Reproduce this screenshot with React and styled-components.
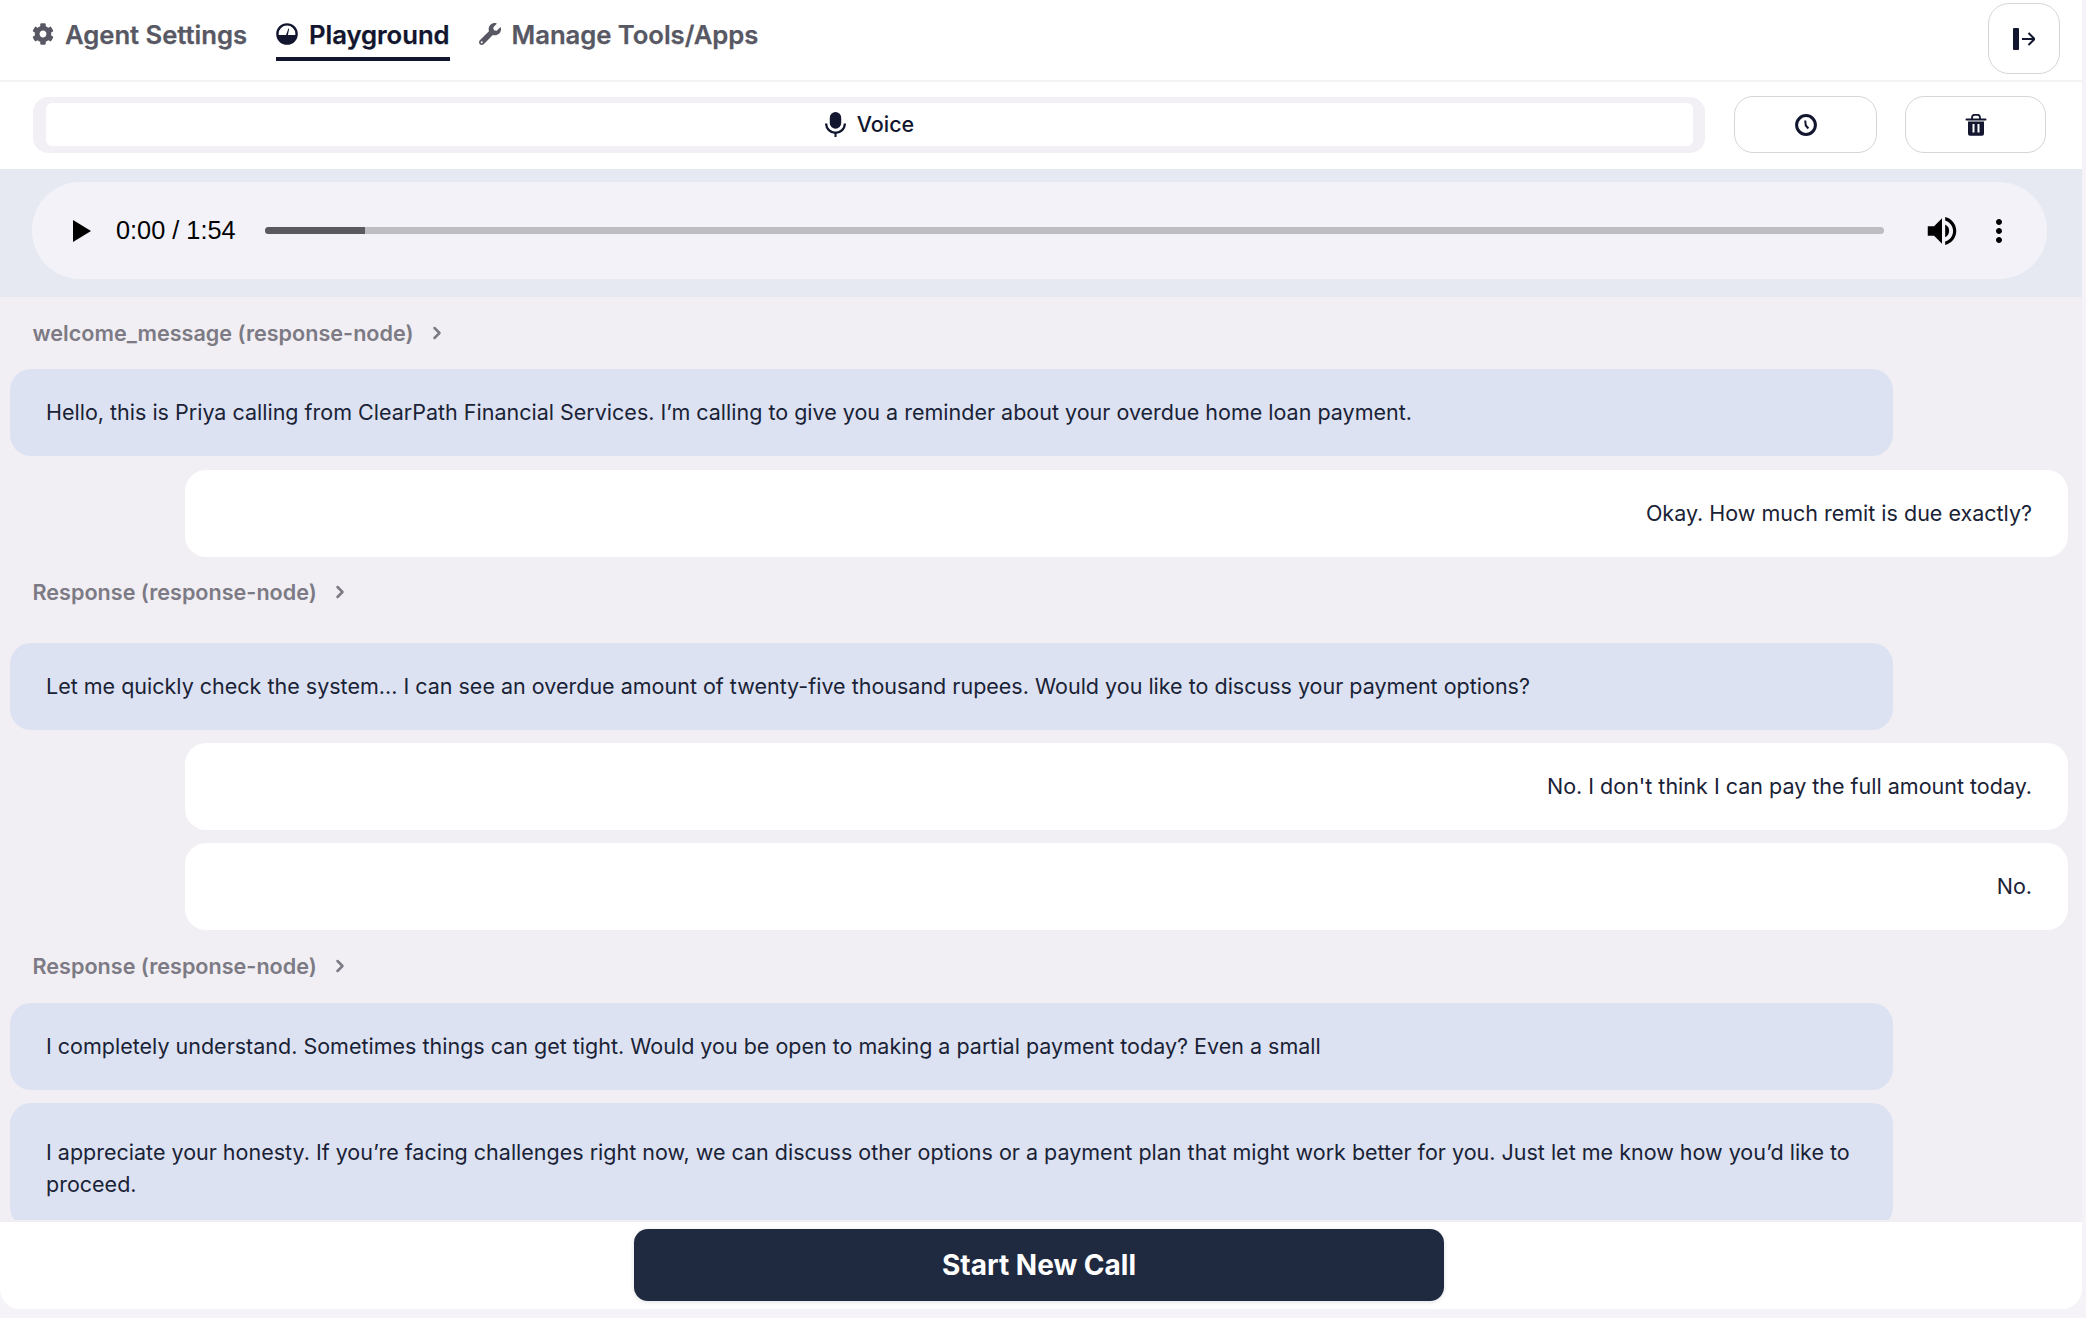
import React from 'react';
import styled, {createGlobalStyle} from 'styled-components';
import {FaCog, FaWrench} from 'react-icons/fa';
import {MdVolumeUp, MdMoreVert} from 'react-icons/md';
import {LuChevronRight} from 'react-icons/lu';

const GlobalStyle = createGlobalStyle`
  html, body {
    margin: 0;
    padding: 0;
    background: #f5f3f8;
    font-family: Inter, "Noto Sans", sans-serif;
  }
  * {
    box-sizing: border-box;
  }
`;

const Shell = styled.div`
  width: 2082px;
  height: 1309px;
  display: flex;
  flex-direction: column;
  background: #f1eff3;
  border-radius: 0 0 20px 20px;
  overflow: hidden;
`;

const Header = styled.header`
  flex: none;
  height: 82px;
  background: #fff;
  border-bottom: 2px solid #f3f2f5;
  display: flex;
  justify-content: space-between;
  align-items: flex-start;
  padding: 3px 22px 0 32px;
`;

const Tabs = styled.nav`
  display: flex;
  gap: 29px;
  margin-top: -3px;
`;

const Tab = styled.div`
  height: 61px;
  display: flex;
  align-items: center;
  gap: 11px;
  padding-top: 11px;
  font-size: 25.7px;
  font-weight: 600;
  letter-spacing: -0.05px;
  -webkit-text-stroke: 0.25px currentColor;
  color: ${(p) => (p.$active ? '#12162e' : '#575863')};
  border-bottom: 4px solid ${(p) => (p.$active ? '#12162e' : 'transparent')};
`;

const TabIcon = styled.span`
  width: 22px;
  height: 22px;
  display: flex;
  align-items: center;
  justify-content: center;
  svg {
    width: 22px;
    height: 22px;
    fill: currentColor;
  }
`;

const LogoutButton = styled.button`
  width: 72px;
  height: 71px;
  background: #fff;
  border: 1.5px solid #d6d6da;
  border-radius: 21px;
  display: flex;
  align-items: center;
  justify-content: center;
  color: #12162e;
  padding: 0;
`;

const Toolbar = styled.div`
  flex: none;
  height: 87px;
  background: #fff;
  display: flex;
  align-items: flex-start;
  padding: 14px 36px 0 33px;
  gap: 28px;
`;

const ModeTrack = styled.div`
  flex: 1;
  height: 56px;
  margin: 1px 1px 0 0;
  background: #f2f0f4;
  border-radius: 15px;
  padding: 6px 12px 7px 13px;
`;

const ModeOption = styled.div`
  height: 100%;
  background: #fff;
  border-radius: 6px;
  display: flex;
  align-items: center;
  justify-content: center;
  gap: 11px;
  padding-bottom: 1px;
  font-size: 21.5px;
  font-weight: 500;
  color: #12162e;
`;

const ToolButton = styled.button`
  width: ${(p) => p.$width}px;
  height: 57px;
  background: #fff;
  border: 1.5px solid #d6d6da;
  border-radius: 19px;
  display: flex;
  align-items: center;
  justify-content: center;
  padding: 0;
  color: #12162e;
`;

const PlayerBand = styled.div`
  flex: none;
  height: 128px;
  background: #e6e8f2;
  padding: 13px 35px 18px 32px;
`;

const Player = styled.div`
  height: 97px;
  background: #f2f2f8;
  border-radius: 48px;
  display: flex;
  align-items: center;
  padding-left: 40px;
  color: #000;
`;

const PlayIcon = styled.span`
  width: 0;
  height: 0;
  border-style: solid;
  border-width: 11px 0 11px 18px;
  border-color: transparent transparent transparent #000;
  margin-left: 1px;
  margin-right: 25px;
`;

const TimeText = styled.span`
  font-family: "Liberation Sans", Arial, sans-serif;
  font-size: 25.3px;
  width: 149px;
  flex: none;
`;

const Seek = styled.div`
  width: 1619px;
  height: 7px;
  background: #bebdc2;
  border-radius: 4px;
  overflow: hidden;
`;

const SeekFill = styled.div`
  width: ${(p) => p.$pct}%;
  height: 100%;
  background: #5a5960;
`;

const VolumeIcon = styled(MdVolumeUp)`
  width: 38px;
  height: 38px;
  margin-left: 39px;
  flex: none;
`;

const MoreIcon = styled(MdMoreVert)`
  width: 36px;
  height: 36px;
  margin-left: 20px;
  flex: none;
`;

const Chat = styled.main`
  flex: 1;
  min-height: 0;
  overflow: hidden;
  padding: 20px 14px 0 10px;
  display: flex;
  flex-direction: column;
`;

const NodeLabel = styled.div`
  height: 32px;
  flex: none;
  display: flex;
  align-items: center;
  gap: 13px;
  margin: ${(p) => p.$top || 0}px 0 ${(p) => p.$bottom || 20}px 22.5px;
  font-size: 21.6px;
  font-weight: 600;
  color: #7c7a84;
  svg {
    width: 20px;
    height: 20px;
    stroke-width: 3;
  }
`;

const Bubble = styled.div`
  flex: none;
  min-height: 87px;
  padding: ${(p) => (p.$tall ? '33px' : '27px')} 36px 28px;
  margin-bottom: ${(p) => (p.$tight ? '13px' : '13.5px')};
  border-radius: 21px;
  font-size: 21.5px;
  line-height: 32px;
  color: #1a2236;
  background: ${(p) => (p.$user ? '#fff' : '#dce2f2')};
  margin-left: ${(p) => (p.$user ? '175px' : '0')};
  margin-right: ${(p) => (p.$user ? '0' : '175px')};
  text-align: ${(p) => (p.$user ? 'right' : 'left')};
`;

const Footer = styled.footer`
  flex: none;
  height: 87px;
  margin-top: 2px;
  background: #fff;
  display: flex;
  justify-content: center;
  padding: 7px 4px 0 0;
`;

const StartButton = styled.button`
  width: 810px;
  height: 72px;
  background: #1f2a40;
  color: #fff;
  border: none;
  border-radius: 14px;
  font-family: inherit;
  font-size: 28px;
  font-weight: 700;
  box-shadow: 0 1px 4px rgba(31, 42, 64, 0.15);
`;

const GaugeIcon = () => (
  <svg viewBox="0 0 22 22">
    <circle cx="11" cy="11" r="9.6" fill="none" stroke="currentColor" strokeWidth="2.4" />
    <path d="M1.6 12h18.8A9.6 9.6 0 0 1 11 21 9.6 9.6 0 0 1 1.6 12z" />
    <path d="M10 12l2.4-6.5 0.7 0.2-1.2 6.3z" />
  </svg>
);

const MicIcon = () => (
  <svg width="21" height="25" viewBox="0 0 20 24" fill="#12162e">
    <rect x="4.5" y="0" width="11" height="16" rx="5.5" />
    <path d="M1 9.5a9 9 0 0 0 18 0" fill="none" stroke="#12162e" strokeWidth="2.2" transform="translate(0 1.5)" />
    <rect x="9" y="19" width="2" height="5" />
  </svg>
);

const ClockIcon = () => (
  <svg width="22" height="22" viewBox="0 0 22 22" fill="none" stroke="#12162e">
    <circle cx="11" cy="11" r="9.4" strokeWidth="3" />
    <path d="M10.2 6.5l0.6 5 2.6 3" strokeWidth="2" />
  </svg>
);

const TrashIcon = () => (
  <svg width="22" height="22" viewBox="0 0 22 22" fill="#12162e">
    <path d="M7 5V3.2A2.6 2.6 0 0 1 9.6 0.8h2.8A2.6 2.6 0 0 1 15 3.2V5" fill="none" stroke="#12162e" strokeWidth="1.8" />
    <rect x="0.5" y="4.5" width="21" height="2" rx="1" />
    <path d="M3 7.5h16v12.2a2 2 0 0 1-2 2H5a2 2 0 0 1-2-2zM7.5 10v8.5h2V10zm5 0v8.5h2V10z" fillRule="evenodd" />
  </svg>
);

const LogoutIcon = () => (
  <svg width="22" height="22" viewBox="0 0 22 22">
    <rect x="0" y="0" width="6" height="22" rx="1" fill="#12162e" />
    <path d="M9 11h12M15.5 5l6 6-6 6" fill="none" stroke="#12162e" strokeWidth="2" />
  </svg>
);

const Label = ({children, ...rest}) => (
  <NodeLabel {...rest}>
    <span>{children}</span>
    <LuChevronRight />
  </NodeLabel>
);

export default function App() {
  return (
    <Shell>
      <GlobalStyle />
      <Header>
        <Tabs>
          <Tab>
            <TabIcon>
              <FaCog />
            </TabIcon>
            Agent Settings
          </Tab>
          <Tab $active>
            <TabIcon>
              <GaugeIcon />
            </TabIcon>
            Playground
          </Tab>
          <Tab>
            <TabIcon>
              <FaWrench />
            </TabIcon>
            Manage Tools/Apps
          </Tab>
        </Tabs>
        <LogoutButton aria-label="Log out">
          <LogoutIcon />
        </LogoutButton>
      </Header>
      <Toolbar>
        <ModeTrack>
          <ModeOption>
            <MicIcon />
            Voice
          </ModeOption>
        </ModeTrack>
        <ToolButton $width={143} aria-label="History">
          <ClockIcon />
        </ToolButton>
        <ToolButton $width={141} aria-label="Delete">
          <TrashIcon />
        </ToolButton>
      </Toolbar>
      <PlayerBand>
        <Player>
          <PlayIcon />
          <TimeText>0:00 / 1:54</TimeText>
          <Seek>
            <SeekFill $pct={6.2} />
          </Seek>
          <VolumeIcon />
          <MoreIcon />
        </Player>
      </PlayerBand>
      <Chat>
        <Label>welcome_message (response-node)</Label>
        <Bubble>
          Hello, this is Priya calling from ClearPath Financial Services. I’m calling to give you a
          reminder about your overdue home loan payment.
        </Bubble>
        <Bubble $user>Okay. How much remit is due exactly?</Bubble>
        <Label $top={6} $bottom={34.5}>
          Response (response-node)
        </Label>
        <Bubble $tight>
          Let me quickly check the system... I can see an overdue amount of twenty-five thousand
          rupees. Would you like to discuss your payment options?
        </Bubble>
        <Bubble $user>No. I don't think I can pay the full amount today.</Bubble>
        <Bubble $user>No.</Bubble>
        <Label $top={6} $bottom={21}>
          Response (response-node)
        </Label>
        <Bubble $tight>
          I completely understand. Sometimes things can get tight. Would you be open to making a
          partial payment today? Even a small
        </Bubble>
        <Bubble $tall>
          I appreciate your honesty. If you’re facing challenges right now, we can discuss other
          options or a payment plan that might work better for you. Just let me know how you’d like
          to proceed.
        </Bubble>
      </Chat>
      <Footer>
        <StartButton>Start New Call</StartButton>
      </Footer>
    </Shell>
  );
}
